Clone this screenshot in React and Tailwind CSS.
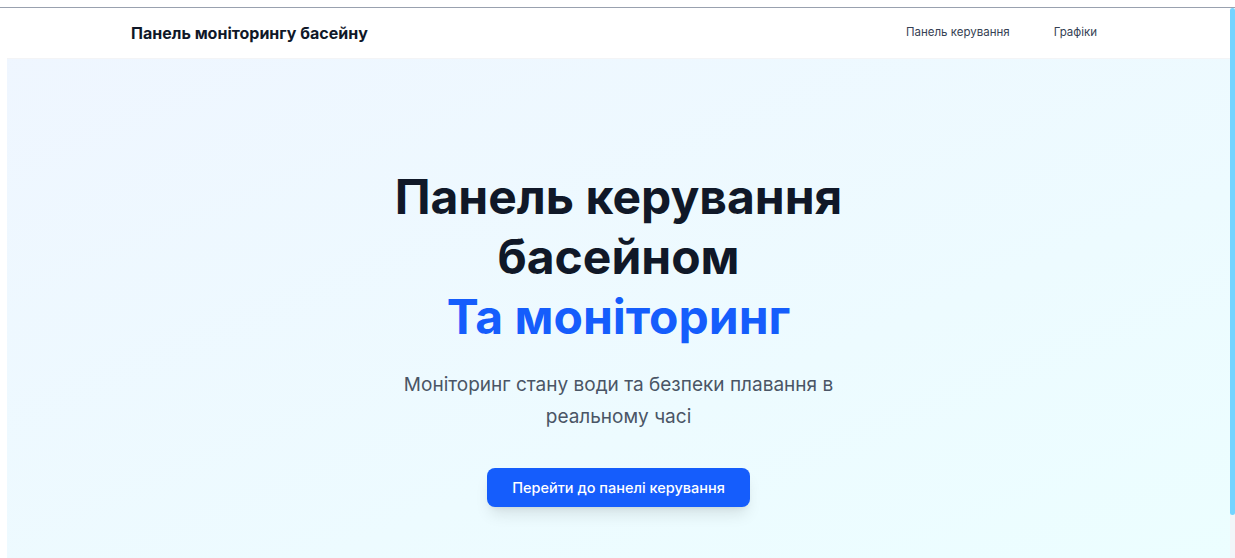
export default function App() {
  return (
    <div className="min-h-screen bg-white pt-[7px] font-['Inter','Noto_Sans',sans-serif]">
      <div className="flex h-[551px] border-t border-gray-400">
        <div className="w-[7px] shrink-0 bg-white" />

        <div className="flex flex-1 flex-col overflow-hidden">
          {/* Top navigation */}
          <header className="h-[51px] shrink-0 border-b border-gray-100 bg-white">
            <div className="flex h-full items-center justify-between pl-[124px] pr-[133px]">
              <span className="text-[16px] font-bold text-gray-900">
                Панель моніторингу басейну
              </span>
              <nav className="flex items-center gap-[44px] text-[11.5px] text-gray-700">
                <a href="#">Панель керування</a>
                <a href="#">Графіки</a>
              </nav>
            </div>
          </header>

          {/* Hero */}
          <main className="flex flex-1 flex-col items-center bg-gradient-to-br from-blue-50 to-cyan-50 pt-[108px] text-center">
            <h1 className="text-[48px] font-bold leading-[60px] text-gray-900">
              Панель керування
              <br />
              басейном
              <br />
              <span className="text-blue-600">Та моніторинг</span>
            </h1>
            <p className="mt-[22px] w-[470px] text-[19px] leading-[32px] text-gray-600">
              Моніторинг стану води та безпеки плавання в реальному часі
            </p>
            <button className="mt-[35px] h-[39px] w-[263px] rounded-lg bg-blue-600 text-[14.5px] font-medium text-white shadow-lg">
              Перейти до панелі керування
            </button>
          </main>
        </div>

        {/* Scrollbar */}
        <div className="flex w-[5px] shrink-0 flex-col bg-slate-100">
          <div className="h-[507px] rounded-sm bg-sky-300" />
        </div>
      </div>
    </div>
  );
}
